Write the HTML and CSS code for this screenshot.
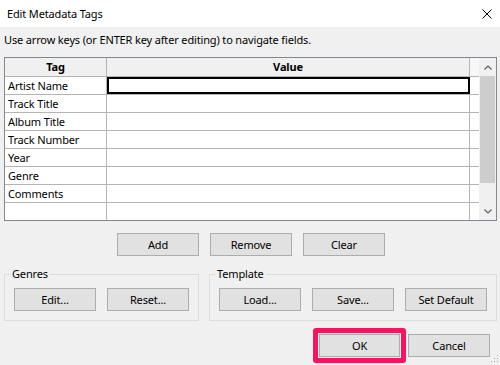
FILE: index.html
```html
<!doctype html>
<html lang="en">
<head>
    <meta charset="UTF-8">
    <title>Edit Metadata Tags</title>
    <link rel="stylesheet" href="styles.css">
</head>
<body>
<div class="window">
    <!--title bar-->
    <div class="titlebar">
        <span class="title">Edit Metadata Tags</span>
        <svg class="close" width="10" height="10" viewBox="0 0 10 10">
            <path d="M0.5 0.5 L9.5 9.5 M9.5 0.5 L0.5 9.5" stroke="#000" stroke-width="1" fill="none"/>
        </svg>
    </div>

    <p class="hint">Use arrow keys (or ENTER key after editing) to navigate fields.</p>

    <!--tag grid-->
    <div class="grid">
        <div class="table">
            <div class="row head">
                <div class="cell tag">Tag</div>
                <div class="cell value">Value</div>
                <div class="fill"></div>
            </div>
            <div class="row">
                <div class="cell tag">Artist Name</div>
                <div class="cell value current"></div>
                <div class="fill"></div>
            </div>
            <div class="row">
                <div class="cell tag">Track Title</div>
                <div class="cell value"></div>
                <div class="fill"></div>
            </div>
            <div class="row">
                <div class="cell tag">Album Title</div>
                <div class="cell value"></div>
                <div class="fill"></div>
            </div>
            <div class="row">
                <div class="cell tag">Track Number</div>
                <div class="cell value"></div>
                <div class="fill"></div>
            </div>
            <div class="row">
                <div class="cell tag">Year</div>
                <div class="cell value"></div>
                <div class="fill"></div>
            </div>
            <div class="row">
                <div class="cell tag">Genre</div>
                <div class="cell value"></div>
                <div class="fill"></div>
            </div>
            <div class="row">
                <div class="cell tag">Comments</div>
                <div class="cell value"></div>
                <div class="fill"></div>
            </div>
            <div class="row last">
                <div class="cell tag"></div>
                <div class="cell value"></div>
                <div class="fill"></div>
            </div>
        </div>
        <div class="scrollbar">
            <div class="arrow">
                <svg width="8" height="5" viewBox="0 0 8 5"><path d="M0.5 4.5 L4 1 L7.5 4.5" stroke="#606060" stroke-width="1.2" fill="none"/></svg>
            </div>
            <div class="thumb"></div>
            <div class="track"></div>
            <div class="arrow">
                <svg width="8" height="5" viewBox="0 0 8 5"><path d="M0.5 0.5 L4 4 L7.5 0.5" stroke="#606060" stroke-width="1.2" fill="none"/></svg>
            </div>
        </div>
    </div>

    <div class="actions">
        <button class="btn">Add</button>
        <button class="btn">Remove</button>
        <button class="btn">Clear</button>
    </div>

    <div class="groups">
        <fieldset class="group genres">
            <legend>Genres</legend>
            <button class="btn">Edit...</button>
            <button class="btn">Reset...</button>
        </fieldset>
        <fieldset class="group template">
            <legend>Template</legend>
            <button class="btn">Load...</button>
            <button class="btn">Save...</button>
            <button class="btn">Set Default</button>
        </fieldset>
    </div>

    <div class="footer">
        <span class="mark"><button class="btn ok">OK</button></span>
        <button class="btn cancel">Cancel</button>
    </div>

    <!--resize grip-->
    <svg class="grip" width="8" height="8" viewBox="0 0 8 8">
        <rect x="6" y="0" width="1" height="1" fill="#b0b0b0"/>
        <rect x="3" y="3" width="1" height="1" fill="#b0b0b0"/>
        <rect x="6" y="3" width="1" height="1" fill="#b0b0b0"/>
        <rect x="0" y="6" width="1" height="1" fill="#b0b0b0"/>
        <rect x="3" y="6" width="1" height="1" fill="#b0b0b0"/>
        <rect x="6" y="6" width="1" height="1" fill="#b0b0b0"/>
    </svg>
</div>
</body>
</html>
```
FILE: styles.css
```css
* {
    margin: 0;
    padding: 0;
    box-sizing: border-box;
}

body {
    background-color: #f0f0f0;
    font-family: "Noto Sans", "Open Sans", sans-serif;
    font-size: 11px;
    letter-spacing: -0.15px;
    color: #000000;
}

.window {
    position: relative;
    width: 500px;
    height: 365px;
    overflow: hidden;
}

.titlebar {
    height: 27px;
    background-color: #ffffff;
    display: flex;
    align-items: center;
    justify-content: space-between;
    padding: 0 8px 0 7px;
}

.hint {
    line-height: 16px;
    padding: 5px 0 0 4px;
    height: 30px;
}

.grid {
    margin: 0 3px 0 4px;
    height: 164px;
    border: 1px solid #828790;
    display: flex;
    background-color: #ffffff;
}

.table {
    flex: 1;
}

.row {
    display: flex;
    height: 18px;
    border-bottom: 1px solid #b4b4b4;
}

.row.head {
    height: 19px;
    background-color: #f0f0f0;
    font-weight: bold;
}

.row.last {
    height: 17px;
    border-bottom: none;
}

.cell {
    line-height: 17px;
    padding-left: 3px;
    border-right: 1px solid #b4b4b4;
}

.cell.tag {
    width: 102px;
}

.cell.value {
    width: 363px;
}

.head .cell {
    text-align: center;
    padding-left: 0;
    line-height: 18px;
}

.cell.current {
    box-shadow: inset 0 0 0 2px #000000;
    height: 17px;
    margin-right: 1px;
    border-right: none;
    width: 363px;
}

.fill {
    flex: 1;
}

.head .fill {
    background-color: #f7f7f7;
}

.scrollbar {
    width: 17px;
    background-color: #f0f0f0;
    display: flex;
    flex-direction: column;
}

.arrow {
    height: 18px;
    display: flex;
    align-items: center;
    justify-content: center;
}

.thumb {
    height: 107px;
    margin: 0 1px;
    background-color: #cdcdcd;
}

.track {
    flex: 1;
}

.btn {
    font-family: inherit;
    font-size: 11px;
    letter-spacing: -0.15px;
    color: #000000;
    width: 82px;
    height: 23px;
    background-color: #e1e1e1;
    border: 1px solid #adadad;
}

.actions {
    display: flex;
    gap: 11px;
    padding: 12px 0 0 117px;
    height: 45px;
}

.groups {
    display: flex;
    gap: 10px;
    padding: 0 4px 0 4px;
}

.group {
    border: 1px solid #dcdcdc;
    padding: 6px 9px 9px 9px;
    display: flex;
    gap: 11px;
}

.group legend {
    padding: 0 2px;
    margin-left: -4px;
    line-height: 16px;
}

.genres {
    width: 196px;
}

.template {
    flex: 1;
}

.footer {
    display: flex;
    justify-content: flex-end;
    align-items: center;
    padding: 7px 10px 0 0;
}

.mark {
    display: block;
    border: 5px solid #f5145d;
    border-radius: 3px;
    padding: 1px;
    margin-right: 2px;
}

.ok {
    width: 81px;
    display: block;
}

.cancel {
    width: 82px;
}

.grip {
    position: absolute;
    right: 1px;
    bottom: 2px;
}
```
